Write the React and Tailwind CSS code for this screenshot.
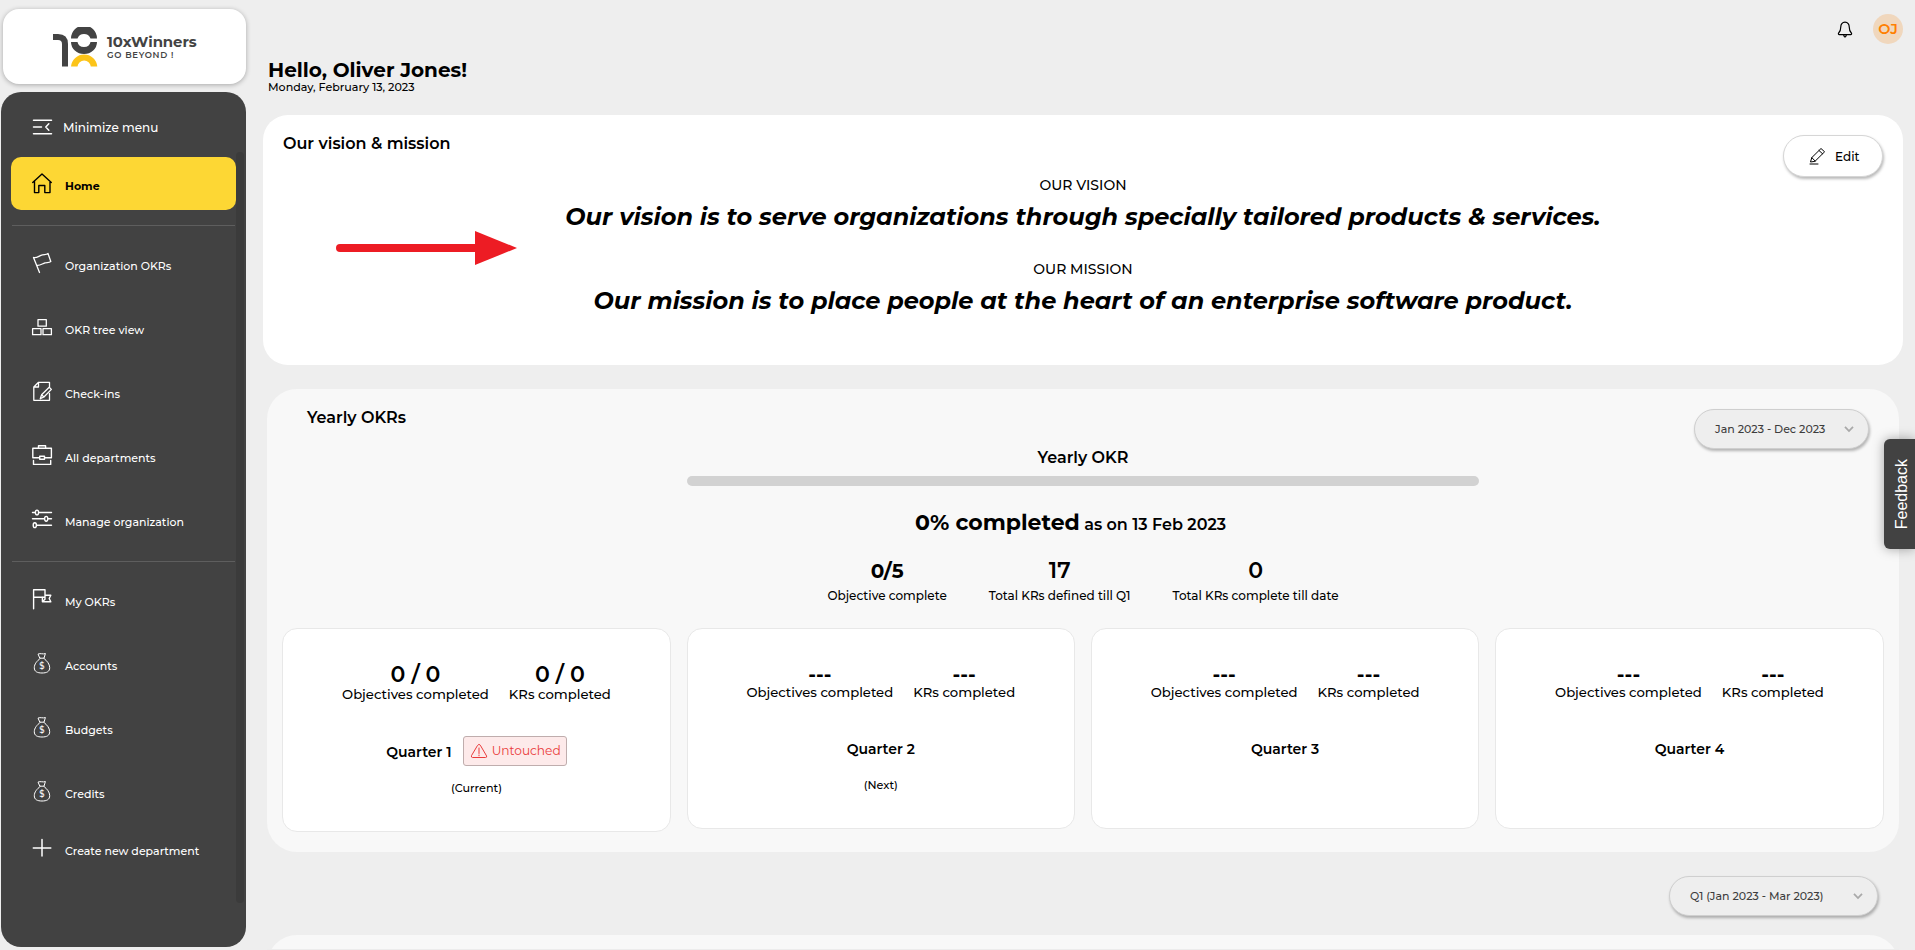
const stroke = { fill: "none", stroke: "currentColor", strokeLinecap: "round", strokeLinejoin: "round" };

function Icon({ children, width = 1.3 }) {
  return (
    <svg viewBox="0 0 22 22" className="size-[22px] shrink-0" {...stroke} strokeWidth={width}>
      {children}
    </svg>
  );
}

const HomeIcon = () => (
  <Icon width={1.4}>
    <path d="M1.7 9.4 11 .9 20.3 9.4M3.5 8.3V19.6H7.8V12.5H13.8V19.6H19V8.3" />
  </Icon>
);

const FlagIcon = () => (
  <Icon>
    <path d="M2.5 5.5 8.5 20.5M2.5 5.5C6 6.5 8 3.5 11.5 2.8C14 2.3 15 3 17 1.5L19.8 9.5C18 11 16 10.3 14 10.9C11 11.8 9 13.8 5.6 13.2" />
  </Icon>
);

const TreeIcon = () => (
  <Icon>
    <path d="M7 3.6H15.3V10.2H7ZM1.6 12.7H10V18.7H1.6ZM12 12.7H20.4V18.7H12Z" />
  </Icon>
);

const CheckInIcon = () => (
  <Icon>
    <path d="M18.5 7.5V2.3H7.5L2.8 7V20.3H18.5V13.5M7.5 2.3V7H2.8M9.3 18.7 10.6 14.8 18.2 7.3 20.4 9.4 12.9 17ZM10.6 14.8 12.9 17" />
  </Icon>
);

const BriefcaseIcon = () => (
  <Icon width={1.4}>
    <path d="M7.5 4V1.8H14.6V4M8.7 13.8H1.8V4.3H20.4V13.8H13.5M8.7 12.2H13.5V15.2H8.7ZM2.5 16.4V20.4H19.7V16.4" />
  </Icon>
);

const SlidersIcon = () => (
  <Icon width={1.4}>
    <path d="M1.5 4.5H4.2M7.8 4.5H20.5M1.5 10.8H13.3M17 10.8H20.5M6 17.2H20.5" />
    <ellipse cx="6" cy="4.5" rx="1.6" ry="2.4" />
    <ellipse cx="15.2" cy="10.8" rx="1.6" ry="2.4" />
    <ellipse cx="3.8" cy="17.2" rx="1.6" ry="2.4" />
  </Icon>
);

const MyFlagIcon = () => (
  <Icon width={1.4}>
    <path d="M2.6 20.8V1.8H14V7.2M2.6 9.2H11.2M14 7.2H19.8L18.2 10.5L19.8 13.8H11.4V9.2H14ZM14 9.2V11.2L11.6 13.4" />
  </Icon>
);

const BagIcon = () => (
  <Icon width={1}>
    <path d="M7.4 1.9C9.5.9 12 2.6 14.4 1.5L13 6.2H9.2ZM9.2 6.4C6 9 3.3 12 3.3 15.7C3.3 19.6 6.3 21 11 21S18.7 19.6 18.7 15.7C18.7 12 16 9 13 6.4" />
    <text x="11" y="17.1" textAnchor="middle" fontSize="8.5" fontWeight="500" fill="currentColor" stroke="none" fontFamily="Montserrat, Inter, sans-serif">
      $
    </text>
  </Icon>
);

const PlusIcon = () => (
  <Icon width={1.5}>
    <path d="M11 2.5V19M2.3 11H19.8" />
  </Icon>
);

const MinimizeIcon = () => (
  <Icon width={1.5}>
    <path d="M2.5 4.2H20.5M2.5 11H10.5M17.8 7.8 14.8 11 17.8 14.2M2.5 17.8H20.5" />
  </Icon>
);

const Chevron = () => (
  <svg viewBox="0 0 10 8" className="h-2 w-2.5" fill="none" stroke="#a9a9a9" strokeWidth="1.8">
    <path d="M1 1.8 5 6 9 1.8" />
  </svg>
);

function Logo() {
  return (
    <div className="ml-[3px] mt-[9px] flex h-[75px] w-[243px] items-center rounded-2xl bg-white pl-[50px] shadow-[0_1px_5px_rgba(0,0,0,0.3)]">
      <svg viewBox="0 0 46 40" className="h-10 w-[46px]">
        <path d="M0 10H5Q12 10 12 17V39.5" fill="none" stroke="#434343" strokeWidth="6" />
        <path d="M18 11.5A13 13 0 0 1 44 11.5H37.5A7 7 0 0 0 24.5 11.5Z" fill="#434343" />
        <path d="M18 15A13 12 0 0 0 44 15H37.5A6.6 6 0 0 1 24.5 15Z" fill="#434343" />
        <path d="M18 39.5A13.2 13.2 0 0 1 44.3 39.5H37.8A6.7 6.7 0 0 0 24.5 39.5Z" fill="#fcc419" />
      </svg>
      <div className="ml-2 flex flex-col text-[#434343]">
        <span className="text-[14.9px] leading-[18px] font-bold tracking-[-0.08px]">10xWinners</span>
        <span className="pb-px text-[8.5px] leading-[9px] font-semibold tracking-[0.7px]">GO BEYOND !</span>
      </div>
    </div>
  );
}

function NavItem({ icon, label }) {
  return (
    <div className="flex h-16 items-center gap-3 pl-[30px]">
      {icon}
      <span className="pt-1.5 text-[11px] leading-4 font-medium">{label}</span>
    </div>
  );
}

function Sidebar() {
  return (
    <nav className="mt-2 ml-px flex h-[855px] w-[245px] flex-col rounded-[20px] bg-[#424242] text-white">
      <div className="mt-[23px] flex h-[23px] items-center gap-2.5 pl-[30px]">
        <MinimizeIcon />
        <span className="pt-0.5 text-[12px] font-medium">Minimize menu</span>
      </div>
      <div className="mt-[14px] flex h-[751px]">
        <div className="flex w-[235px] flex-col">
          <div className="mt-[5px] ml-2.5 flex h-[53px] items-center gap-3 rounded-[10px] bg-[#fdd734] pl-5 text-black">
            <HomeIcon />
            <span className="pt-[5px] text-[11px] leading-4 font-bold">Home</span>
          </div>
          <div className="mt-[15px] mr-px ml-[11px] h-px bg-[#5e5e5e]" />
          <div className="mt-[5px] flex flex-col">
            <NavItem icon={<FlagIcon />} label="Organization OKRs" />
            <NavItem icon={<TreeIcon />} label="OKR tree view" />
            <NavItem icon={<CheckInIcon />} label="Check-ins" />
            <NavItem icon={<BriefcaseIcon />} label="All departments" />
            <NavItem icon={<SlidersIcon />} label="Manage organization" />
          </div>
          <div className="mt-[10px] mr-px ml-[11px] h-px bg-[#5e5e5e]" />
          <div className="mt-[5px] flex flex-col">
            <NavItem icon={<MyFlagIcon />} label="My OKRs" />
            <NavItem icon={<BagIcon />} label="Accounts" />
            <NavItem icon={<BagIcon />} label="Budgets" />
            <NavItem icon={<BagIcon />} label="Credits" />
          </div>
          <div className="flex h-[37px] items-start gap-3 pt-[14px] pl-[30px]">
            <PlusIcon />
            <span className="pt-[6px] text-[11px] leading-4 font-medium">Create new department</span>
          </div>
        </div>
        <div className="w-2 rounded-full bg-[#3b3b3b]" />
      </div>
    </nav>
  );
}

function PeriodSelect({ label, className }) {
  return (
    <div className={`flex h-10 items-center justify-between rounded-full border border-[#cfcfcf] bg-[#eeeeee] pl-5 text-[11px] font-medium text-[#3d3d3d] shadow-[1px_2px_3px_rgba(0,0,0,0.28)] ${className}`}>
      <span>{label}</span>
      <Chevron />
    </div>
  );
}

function VisionMission() {
  return (
    <section className="relative mt-[21px] ml-[17px] flex h-[250px] w-[1640px] shrink-0 flex-col rounded-[25px] bg-white px-5 pt-5 text-center">
      <div className="flex h-[41px] items-start justify-between">
        <h2 className="text-[16px] leading-[17px] font-semibold">Our vision &amp; mission</h2>
        <button className="flex h-[42px] w-[100px] shrink-0 items-center rounded-full border border-[#d6d6d6] bg-white pl-[25px] shadow-[1px_2px_3px_rgba(0,0,0,0.28)]">
          <svg viewBox="0 0 18 18" className="size-[18px]" {...stroke} strokeWidth="1">
            <path d="M1.6 14.6 2.8 10.6 12 1.5 15.6 4.8 6.2 14.1ZM10 3.5 13.6 6.8M2.8 10.6 6.2 14.1M1 17H9" />
          </svg>
          <span className="ml-2 pt-px text-[12px] font-medium">Edit</span>
        </button>
      </div>
      <p className="text-[14px] leading-[18px] font-medium">OUR VISION</p>
      <p className="mt-2 text-[24px] leading-[30px] font-bold italic">
        Our vision is to serve organizations through specially tailored products &amp; services.
      </p>
      <p className="mt-7 text-[14px] leading-[18px] font-medium">OUR MISSION</p>
      <p className="mt-2 text-[24px] leading-[30px] font-bold italic">
        Our mission is to place people at the heart of an enterprise software product.
      </p>
      <svg viewBox="0 0 181 34" className="absolute top-[116px] left-[73px] h-[34px] w-[181px]" fill="#ed1c24">
        <rect x="0" y="13" width="145" height="8" rx="4" />
        <path d="M139 0 181 17 139 34Z" />
      </svg>
    </section>
  );
}

const totals = [
  { value: "0/5", label: "Objective complete", style: "text-[20px] font-bold" },
  { value: "17", label: "Total KRs defined till Q1", style: "text-[22px] font-semibold" },
  { value: "0", label: "Total KRs complete till date", style: "text-[22px] font-semibold" },
];

const quarters = [
  { name: "Quarter 1", value: "0 / 0", note: "(Current)", untouched: true },
  { name: "Quarter 2", value: "---", note: "(Next)" },
  { name: "Quarter 3", value: "---" },
  { name: "Quarter 4", value: "---" },
];

function QuarterCard({ name, value, note, untouched }) {
  const valueStyle = untouched ? "h-[22px] text-[22px] leading-[22px] font-semibold" : "h-5 text-[20px] leading-5 font-bold";
  return (
    <div className={`flex flex-col items-center rounded-[15px] border border-[#e8e8e8] bg-white pt-[35px] ${untouched ? "h-[204px]" : "h-[201px]"}`}>
      <div className="flex gap-5 text-center">
        {["Objectives completed", "KRs completed"].map((label) => (
          <div key={label} className="flex flex-col">
            <span className={valueStyle}>{value}</span>
            <span className="text-[13.2px] leading-[17px] font-medium">{label}</span>
          </div>
        ))}
      </div>
      <div className="mt-[33px] flex h-[30px] items-center">
        <span className={`text-[14px] leading-4 font-semibold ${untouched ? "pt-0.5" : ""}`}>{name}</span>
        {untouched && (
          <span className="ml-[11px] flex h-[30px] w-[104px] items-center rounded-[3px] border border-[#bfadad] bg-[#fdeaea] pl-1.5 text-[#ea3b3b]">
            <svg viewBox="0 0 18 16" className="h-4 w-[18px]" {...stroke} strokeWidth="1">
              <path d="M7.7 2.2Q9 .3 10.3 2.2L16.6 13Q17 14.5 15.6 14.5H2.4Q1 14.5 1.4 13ZM9 5V10.5M9 12V12.8" />
            </svg>
            <span className="ml-1 text-[12.2px]">Untouched</span>
          </span>
        )}
      </div>
      <span className={`text-[11.2px] leading-[14px] font-medium ${untouched ? "mt-[15px]" : "mt-[14px]"}`}>{note}</span>
    </div>
  );
}

function YearlyOkrs() {
  return (
    <section className="mt-6 ml-[21px] flex h-[463px] w-[1632px] shrink-0 flex-col rounded-[30px] bg-[#f8f8f8] pt-5">
      <div className="flex h-10 shrink-0 items-start justify-between pr-[30px] pl-10">
        <h2 className="text-[16px] leading-[17px] font-semibold">Yearly OKRs</h2>
        <PeriodSelect label="Jan 2023 - Dec 2023" className="w-[175px] pr-[14px]" />
      </div>
      <h3 className="text-center text-[16px] leading-[17px] font-semibold">Yearly OKR</h3>
      <div className="mt-2.5 h-2.5 w-[792px] shrink-0 self-center rounded-full bg-[#d2d2d2]" />
      <p className="mt-6 pr-[25px] text-center text-[16px] leading-[26px] font-semibold">
        <span className="text-[22px] font-bold">0% completed</span> as on 13 Feb 2023
      </p>
      <div className="mt-[19px] flex justify-center gap-[42px] text-center">
        {totals.map(({ value, label, style }) => (
          <div key={label} className="flex flex-col">
            <span className={`h-[31px] leading-7 ${style}`}>{value}</span>
            <span className="text-[12px] leading-4 font-medium">{label}</span>
          </div>
        ))}
      </div>
      <div className="mt-6 grid grid-cols-4 items-start gap-4 pr-[15.4px] pl-[15.3px]">
        {quarters.map((quarter) => (
          <QuarterCard key={quarter.name} {...quarter} />
        ))}
      </div>
    </section>
  );
}

export default function App() {
  return (
    <div className="relative flex h-[950px] w-full overflow-hidden bg-[#eeeeee] font-[Montserrat,Inter,sans-serif] text-black">
      <aside className="flex w-[246px] shrink-0 flex-col">
        <Logo />
        <Sidebar />
      </aside>
      <main className="flex min-w-0 flex-1 flex-col">
        <header className="flex h-[60px] shrink-0 items-start justify-end pt-[14px] pr-3">
          <svg viewBox="0 0 16 18" className="mt-[7px] mr-[20px] h-[18px] w-4" {...stroke} strokeWidth="1.2">
            <path d="M8 1.2C5.2 1.2 3.8 3.2 3.8 5.8C3.8 9.5 3 10.8 1.5 12.2C1.2 13.2 1.6 13.6 2.2 13.6H13.8C14.4 13.6 14.8 13.2 14.5 12.2C13 10.8 12.2 9.5 12.2 5.8C12.2 3.2 10.8 1.2 8 1.2ZM6.8 14.5Q8 17.5 9.2 14.5" />
          </svg>
          <span className="flex size-[30px] items-center justify-center rounded-full bg-[#f0d7bd] pt-0.5 text-[14.4px] font-semibold text-[#ff7f00]">
            OJ
          </span>
        </header>
        <div className="flex shrink-0 flex-col pl-[22px]">
          <h1 className="text-[20px] leading-5 font-bold">Hello, Oliver Jones!</h1>
          <p className="text-[11.1px] leading-[14px] font-medium">Monday, February 13, 2023</p>
        </div>
        <VisionMission />
        <YearlyOkrs />
        <PeriodSelect label="Q1 (Jan 2023 - Mar 2023)" className="mt-6 mr-[37px] w-[209px] shrink-0 self-end pr-[14px]" />
        <section className="mt-[19px] ml-[21px] h-20 w-[1632px] shrink-0 rounded-t-[30px] bg-[#f8f8f8] pt-[14px]">
          <div className="h-px bg-[#ececec]" />
        </section>
      </main>
      <button className="absolute top-[439px] right-0 flex h-[110px] w-[31px] items-center justify-center rounded-l-md bg-[#424242] pl-[5px] text-white shadow-[0_0_12px_rgba(0,0,0,0.35)]">
        <span className="rotate-180 font-['Liberation_Sans',sans-serif] text-[16px] [writing-mode:vertical-rl]">Feedback</span>
      </button>
    </div>
  );
}
